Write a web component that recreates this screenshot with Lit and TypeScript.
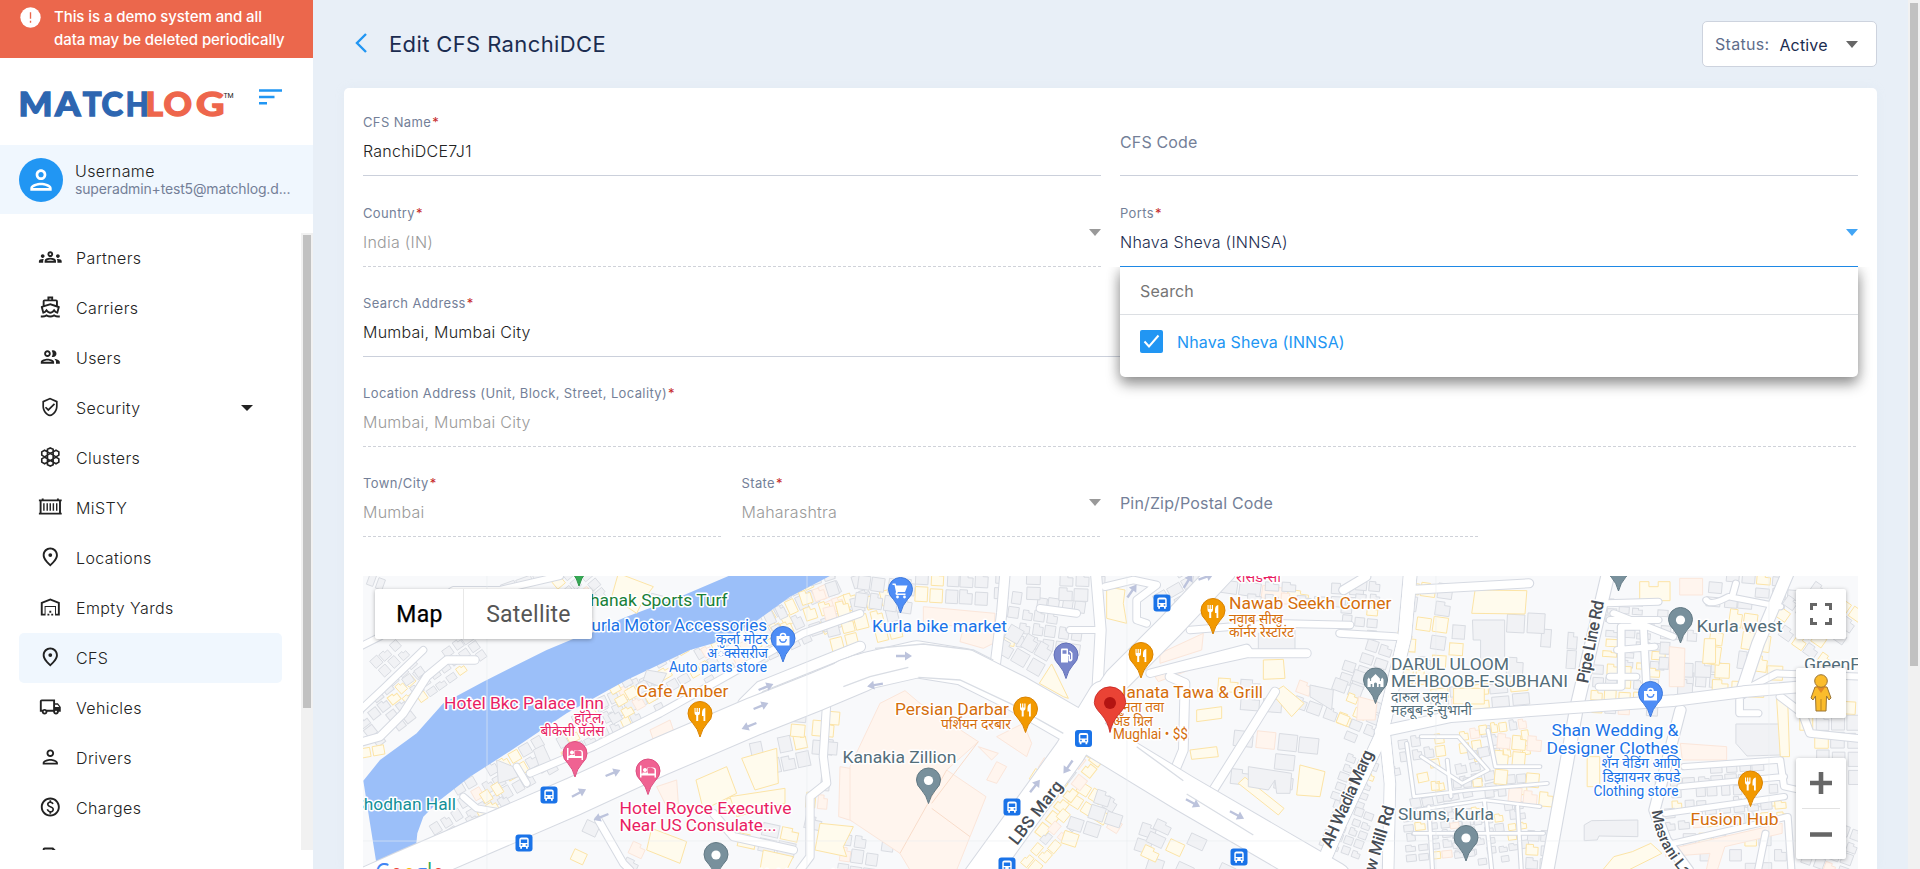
import { LitElement, html, css, svg, nothing } from "lit";
import { customElement, property } from "lit/decorators.js";

/* ---------- icons ---------- */
const icon: Record<string, any> = {
  partners: svg`<path d="M4 13c1.1 0 2-.9 2-2s-.9-2-2-2-2 .9-2 2 .9 2 2 2zm1.13 1.1C4.76 14.04 4.39 14 4 14c-.99 0-1.93.21-2.78.58A2.01 2.01 0 0 0 0 16.43V18h4.5v-1.61c0-.83.23-1.61.63-2.29zM20 13c1.1 0 2-.9 2-2s-.9-2-2-2-2 .9-2 2 .9 2 2 2zm4 3.43c0-.81-.48-1.53-1.22-1.85A6.95 6.95 0 0 0 20 14c-.39 0-.76.04-1.13.1.4.68.63 1.46.63 2.29V18H24v-1.57zM16.24 13.65c-1.17-.52-2.61-.9-4.24-.9s-3.07.39-4.24.9A2.99 2.99 0 0 0 6 16.39V18h12v-1.61c0-1.18-.68-2.26-1.76-2.74zM8.07 16c.09-.23.13-.39.91-.69.97-.38 1.99-.56 3.02-.56s2.05.18 3.02.56c.77.3.81.46.91.69H8.07zM12 8c.55 0 1 .45 1 1s-.45 1-1 1-1-.45-1-1 .45-1 1-1m0-2C10.340 6 9 7.340 9 9s1.340 3 3 3 3-1.340 3-3-1.340-3-3-3z"/>`,
  carriers: svg`<path d="M13 3v1h-2V3h2m-1 7.110l5.380 1.770 2.390.780-1.120 3.970c-.540-.300-.940-.710-1.140-.940L16 13.960l-1.510 1.720c-.340.400-1.280 1.320-2.490 1.320s-2.150-.920-2.490-1.320L8 13.960l-1.510 1.720c-.200.230-.600.630-1.140.930l-1.130-3.960 2.400-.790L12 10.110M15 1H9v3H6c-1.100 0-2 .900-2 2v4.620l-1.290.420c-.260.080-.480.260-.600.500s-.150.520-.060.780L3.950 19H4c1.600 0 3.020-.880 4-2 .980 1.120 2.400 2 4 2s3.020-.880 4-2c.980 1.120 2.400 2 4 2h.050l1.890-6.680c.080-.260.060-.540-.060-.780s-.340-.420-.600-.500L20 10.620V6c0-1.100-.900-2-2-2h-3V1zM6 9.970V6h12v3.970L12 8 6 9.970zM16 19.680c-1.220.850-2.610 1.280-4 1.280s-2.780-.430-4-1.280C6.780 20.530 5.390 21 4 21H2v2h2c1.380 0 2.740-.350 4-.990 1.260.640 2.630.970 4 .970s2.740-.320 4-.970c1.260.650 2.620.990 4 .990h2v-2h-2c-1.390 0-2.780-.470-4-1.320z"/>`,
  users: svg`<path d="M9 13.750c-2.340 0-7 1.170-7 3.500V19h14v-1.750c0-2.330-4.660-3.500-7-3.500zM4.340 17c.840-.580 2.870-1.250 4.660-1.250s3.820.670 4.660 1.250H4.340zM9 12c1.930 0 3.500-1.570 3.500-3.500S10.930 5 9 5 5.500 6.570 5.500 8.500 7.070 12 9 12zm0-5c.830 0 1.500.670 1.500 1.500S9.830 10 9 10s-1.500-.670-1.500-1.500S8.170 7 9 7zm7.040 6.810c1.160.840 1.960 1.960 1.960 3.440V19h4v-1.750c0-2.020-3.500-3.170-5.960-3.440zM15 12c1.930 0 3.500-1.570 3.500-3.500S16.930 5 15 5c-.540 0-1.040.130-1.500.350.630.890 1 1.980 1 3.150s-.370 2.260-1 3.150c.460.220.960.350 1.500.350z"/>`,
  security: svg`<path d="M12 1L3 5v6c0 5.550 3.840 10.740 9 12 5.160-1.260 9-6.450 9-12V5l-9-4zm7 10c0 4.520-2.980 8.690-7 9.930-4.020-1.240-7-5.410-7-9.930V6.300l7-3.110 7 3.110V11zm-11.590.590L6 13l4 4 8-8-1.410-1.420L10 14.170z"/>`,
  clusters: svg`<g fill="none" stroke="currentColor" stroke-width="1.7"><path d="M12 8.200l3 1.800v4l-3 1.800-3-1.800v-4zM12 2.500l3 1.300v3.000l-3 1.500-3-1.500V3.800zM12 15.700l3 1.500v3l-3 1.300-3-1.300v-3zM6 4.900l3 1.700V10l-3 1.900L3 10V6.600zM18 4.900l3 1.700V10l-3 1.900-3-1.900V6.600zM6 12.100l3 1.900v3.400l-3 1.700-3-1.700V14zM18 12.100l3 1.900v3.400l-3 1.700-3-1.700V14z"/></g>`,
  misty: svg`<path d="M0 4h3V3h2v1h14V3h2v1h3v2h-.800v12H24v2H0v-2h.800V6H0zm2.800 2v12h18.400V6zM4.500 8h1.500v8H4.500zM8 8h1.500v8H8zM11.200 8h1.500v8h-1.500zM14.500 8H16v8h-1.500zM18 8h1.500v8H18z"/>`,
  pin: svg`<path d="M12 2C7.800 2 4 5.220 4 10.200c0 3.320 2.670 7.250 8 11.800 5.330-4.550 8-8.480 8-11.800C20 5.220 16.200 2 12 2zm0 17.330c-4.050-3.700-6-6.790-6-9.140C6 6.570 8.650 4 12 4s6 2.570 6 6.200c0 2.340-1.950 5.440-6 9.130z"/><circle cx="12" cy="10" r="2"/>`,
  yard: svg`<path d="M20 8.350V19h-2v-8H6v8H4V8.350l8-3.200 8 3.200M22 21V7L12 3 2 7v14h5v-9h10v9h5zM11 19H9v2h2v-2zm2-3h-2v2h2v-2zm2 3h-2v2h2v-2z"/>`,
  truck: svg`<path d="M20 8h-3V4H3c-1.100 0-2 .900-2 2v11h2c0 1.660 1.340 3 3 3s3-1.340 3-3h6c0 1.660 1.340 3 3 3s3-1.340 3-3h2v-5l-3-4zm-.500 1.500l1.960 2.500H17V9.500h2.500zM6 18c-.550 0-1-.450-1-1s.450-1 1-1 1 .450 1 1-.450 1-1 1zm2.220-3A2.980 2.980 0 0 0 6 14c-.890 0-1.670.390-2.220 1H3V6h12v9H8.220zM18 18c-.550 0-1-.450-1-1s.450-1 1-1 1 .450 1 1-.450 1-1 1z"/>`,
  person: svg`<path d="M12 6c1.100 0 2 .900 2 2s-.900 2-2 2-2-.900-2-2 .900-2 2-2m0 10c2.700 0 5.800 1.290 6 2H6c.230-.720 3.310-2 6-2m0-12C9.790 4 8 5.790 8 8s1.790 4 4 4 4-1.790 4-4-1.790-4-4-4zm0 10c-2.670 0-8 1.340-8 4v2h16v-2c0-2.660-5.330-4-8-4z"/>`,
  charge: svg`<path d="M12 2C6.480 2 2 6.480 2 12s4.480 10 10 10 10-4.480 10-10S17.520 2 12 2zm0 18c-4.410 0-8-3.590-8-8s3.590-8 8-8 8 3.590 8 8-3.590 8-8 8zm.890-8.900c-1.780-.590-2.640-.960-2.640-1.900 0-1.020 1.110-1.390 1.810-1.390 1.310 0 1.790.990 1.900 1.340l1.580-.670c-.150-.440-.820-1.910-2.660-2.230V5h-1.750v1.260c-2.600.560-2.620 2.850-2.620 2.960 0 2.270 2.250 2.910 3.350 3.310 1.580.560 2.280 1.070 2.280 2.030 0 1.130-1.050 1.610-1.980 1.610-1.820 0-2.340-1.870-2.400-2.090l-1.660.670c.630 2.190 2.280 2.780 3.020 2.960V19h1.750v-1.240c.520-.090 3.020-.590 3.020-3.220.010-1.390-.600-2.610-3-3.440z"/>`,
  doc: svg`<path d="M6 2h9l5 5v15H4V4c0-1.100.900-2 2-2zm0 2v16h12V8h-4V4z"/>`,
};

/* ---------- street map ---------- */
function rng(seed: number) {
  let s = seed * 7919 + 13;
  return () => ((s = (s * 16807) % 2147483647) / 2147483647);
}
/* cx, cy, angle, columns, rows, cell width, cell height, warm share, density */
type Block = [number, number, number, number, number, number, number, number, number];
const blocks: Block[] = [
  [385, 585, 20, 4, 1, 10, 15, 0, 0.8], [402, 672, -42, 3, 5, 12, 12, 0.2, 0.85],
  [445, 668, -35, 7, 3, 12, 11, 0.12, 0.85], [383, 715, -38, 4, 4, 13, 12, 0.1, 0.8],
  [372, 752, -10, 2, 1, 14, 12, 1, 1], [525, 582, -20, 3, 1, 18, 13, 0, 1],
  [580, 588, 50, 4, 3, 12, 13, 0.1, 0.9], [650, 598, 15, 2, 1, 14, 12, 0, 1],
  [505, 778, -30, 8, 3, 13, 14, 0.1, 0.75], [470, 815, -32, 7, 2, 12, 14, 0.4, 0.8],
  [585, 730, -28, 5, 3, 13, 14, 0.15, 0.8], [625, 708, -25, 6, 3, 12, 15, 0.2, 0.7],
  [655, 680, -30, 9, 3, 13, 13, 0.3, 0.75], [745, 645, -30, 9, 3, 12, 13, 0.55, 0.75],
  [795, 615, -25, 9, 4, 12, 16, 0.5, 0.8], [835, 597, -18, 5, 4, 14, 16, 0.45, 0.8],
  [862, 622, -14, 5, 3, 15, 17, 0.8, 0.85], [885, 594, 8, 4, 2, 15, 18, 0.3, 0.9],
  [952, 588, 3, 5, 2, 15, 17, 0.3, 1], [1045, 624, 8, 6, 4, 13, 14, 0.12, 0.9],
  [1050, 587, 2, 7, 2, 16, 15, 0.1, 0.85], [1025, 651, 30, 3, 2, 17, 17, 0, 0.9],
  [780, 755, -12, 4, 2, 15, 18, 0.2, 0.8], [820, 765, 5, 2, 5, 12, 18, 0.7, 0.7],
  [1175, 590, -30, 3, 3, 17, 13, 0.3, 0.6], [1250, 590, 8, 5, 1, 24, 16, 0.7, 0.9],
  [1305, 594, 3, 7, 2, 17, 13, 0.2, 0.75], [1360, 610, 5, 3, 5, 13, 12, 0.1, 0.8],
  [1365, 665, 18, 3, 4, 15, 13, 0, 0.75], [1330, 690, 20, 4, 4, 16, 15, 0.15, 0.5],
  [1358, 720, 22, 3, 4, 14, 12, 0.4, 0.75], [1285, 762, 6, 5, 3, 22, 19, 0.15, 0.55],
  [1250, 695, 4, 3, 2, 22, 17, 0.6, 0.6], [1080, 795, 32, 7, 2, 15, 15, 0.7, 0.75],
  [1065, 790, -52, 7, 2, 15, 14, 0.95, 0.9], [1050, 842, -50, 5, 2, 14, 12, 0.9, 0.75],
  [1120, 830, 18, 6, 4, 18, 16, 0.3, 0.35], [1200, 860, 25, 6, 3, 19, 15, 0.25, 0.65],
  [865, 858, 8, 4, 3, 14, 16, 0.2, 0.7], [1355, 782, 20, 3, 5, 12, 10, 0.1, 0.9],
  [1347, 830, 20, 4, 5, 11, 10, 0.1, 0.9], [1425, 615, 8, 3, 4, 17, 17, 0.4, 0.8],
  [1432, 655, 4, 4, 4, 16, 16, 0.4, 0.55], [1460, 698, -5, 7, 2, 20, 14, 0.4, 0.75],
  [1440, 745, -8, 9, 2, 12, 13, 0.7, 0.8], [1500, 740, -8, 6, 3, 10, 13, 0.7, 0.75],
  [1450, 778, -12, 9, 4, 13, 12, 0.15, 0.45], [1480, 800, -5, 9, 4, 11, 12, 0.2, 0.45],
  [1440, 835, -6, 6, 5, 12, 10, 0.12, 0.75], [1490, 835, -8, 7, 6, 11, 10, 0.15, 0.65],
  [1525, 770, 5, 4, 4, 16, 18, 0.6, 0.6], [1540, 850, 3, 2, 3, 14, 14, 0.6, 0.8],
  [1637, 612, 4, 5, 3, 13, 9, 0.15, 0.7], [1635, 650, 4, 4, 4, 16, 10, 0.3, 0.7],
  [1625, 690, 3, 5, 4, 14, 13, 0.5, 0.7], [1690, 650, 4, 5, 5, 13, 15, 0.2, 0.45],
  [1730, 680, 2, 6, 2, 18, 18, 0.8, 0.8], [1740, 640, 8, 4, 3, 16, 20, 0.7, 0.7],
  [1755, 592, 5, 6, 3, 16, 13, 0.2, 0.6], [1815, 620, 35, 5, 5, 15, 14, 0.7, 0.8],
  [1830, 700, 3, 3, 2, 18, 15, 0.5, 0.8], [1710, 775, -3, 8, 2, 14, 11, 0.1, 0.9],
  [1725, 797, -3, 9, 2, 12, 13, 0.35, 0.85], [1725, 815, -5, 9, 2, 14, 12, 0.4, 0.85],
  [1830, 750, 0, 4, 4, 16, 18, 0.3, 0.6], [1735, 855, 0, 7, 3, 15, 15, 0.3, 0.6],
  [1825, 845, 20, 5, 4, 13, 13, 0.3, 0.7], [770, 830, 12, 5, 3, 20, 16, 0.3, 0.35],
  [600, 850, 25, 5, 3, 17, 15, 0.6, 0.4], [815, 725, 5, 3, 4, 17, 15, 0.6, 0.6],
  [1565, 640, 4, 4, 3, 13, 20, 0.1, 0.4], [1515, 645, 3, 3, 3, 20, 22, 0, 0.4],
];
const buildings = blocks.map(([cx, cy, a, nc, nr, w, h, warm, den], bi) => {
  const r = rng(bi + 3);
  const out: any[] = [];
  for (let i = 0; i < nc; i++)
    for (let j = 0; j < nr; j++) {
      const p = r(), k = r(), dx = r() * 3, dy = r() * 3, cut = r();
      if (p > den) continue;
      const x = (i - nc / 2) * w + dx, y = (j - nr / 2) * h + dy;
      const bw = w - 2 - dx * 0.6, bh = h - 2 - dy * 0.8;
      const cls = k < warm ? (k < warm * 0.15 ? "bo" : "by") : "bg";
      const d = cut < 0.4
        ? `M${x} ${y}h${bw * 0.6}v${bh * 0.25}h${bw * 0.4}v${bh * 0.75}h${-bw}z`
        : `M${x} ${y}h${bw}v${bh}h${-bw}z`;
      out.push(svg`<path class=${cls} d=${d}/>`);
    }
  return svg`<g transform=${`translate(${cx} ${cy}) rotate(${a})`}>${out}</g>`;
});

const west = "translate(360 570) scale(.33333)";
const mid = "translate(850 570) scale(.33333)";
const east = "translate(1340 570) scale(.37 .33333)";
const roads: [string, string, number][] = [
  [west, "M-10 520L60 500L130 430L200 320L260 270L345 270", 22],
  [west, "M-10 430L70 355L190 240", 18], [west, "M0 230L60 200L280 60L420 60L600 18", 18],
  [west, "M470 590L500 640", 18], [west, "M310 680L350 715L410 725", 18],
  [west, "M510 610L700 530L900 430L1150 290L1330 190L1500 130", 20],
  [west, "M1150 400L1200 350L1350 290L1500 230", 30],
  [west, "M1400 400L1390 560L1400 640L1350 680L1350 860L1320 900", 22],
  [west, "M715 750L790 880L810 900", 20], [west, "M1060 730L1120 800L1300 840", 22],
  [mid, "M435 290L455 130L465 10", 28], [mid, "M740 400L752 180L738 10", 30],
  [mid, "M765 50L850 30L920 45L860 90L860 150L890 160", 20],
  [mid, "M900 310L1190 235L1200 250", 22], [mid, "M960 300L1190 250L1370 250", 24],
  [mid, "M975 600L1000 540L1005 340L960 320", 26], [mid, "M1090 660L1275 365", 24],
  [mid, "M1020 180L1270 160L1500 165", 20], [mid, "M570 115L680 130", 20],
  [mid, "M660 180L750 180", 18],
  [east, "M-54 900L0 760L110 500L175 200L190 10", 34],
  [east, "M120 480L135 640L130 900", 28], [east, "M0 190L150 200", 20],
  [east, "M190 60L510 40", 24], [east, "M10 60L70 20", 24],
  [east, "M725 10L640 410L560 900", 34],
  [east, "M720 100L860 95M730 150L860 150M740 130L900 200M700 350L760 350L760 170L820 170L830 380M750 240L850 230M730 320L800 320", 18],
  [east, "M990 90Q1000 110 1050 80L1190 110M1060 80L1070 40", 16],
  [east, "M1210 10L1130 220L1085 370", 32], [east, "M1085 365L1180 310L1420 320", 18],
  [east, "M920 420L850 720L880 810L940 900", 28],
  [east, "M1080 390L1080 430L1130 430", 18], [east, "M1190 380L1250 430L1270 490L1400 505", 20],
  [east, "M930 590L1190 570M920 650L1200 620M880 730L1200 680M1190 570L1200 650L1240 660", 16],
  [east, "M900 820L1210 740L1220 900M1150 790L1130 900", 16],
  [east, "M220 500L320 500L400 600L330 640L220 560M180 520L200 680L350 660L560 640M400 480L420 590L540 590M210 720L390 690L540 710M200 790L550 790M240 710L250 900M390 690L410 900M480 710L490 900M290 570L300 680", 8],
];
const highway: [string, string, number][] = [
  [west, "M-60 985L130 900L640 680L900 560L1180 440L1370 365L1500 310", 112],
  [mid, "M-10 322L60 300L200 268L340 290L500 370L700 485L1000 668L1450 930", 108],
  [mid, "M360 960L660 545L760 380", 92], [mid, "M760 390L800 330L960 170L1120 0", 76],
  [east, "M110 485L300 440L640 412L900 392L1090 365L1250 350", 32],
];
const line = (cls: string, extra: number) => ([t, d, w]: [string, string, number]) =>
  svg`<path class=${cls} transform=${t} d=${d} stroke-width=${w + extra}/>`;

const arrows: [number, number, number][] = [
  [766, 687, -22], [761, 706, -22], [749, 726, 158], [613, 773, -22], [579, 793, -28], [601, 817, 158],
  [904, 656, 0], [875, 685, 170], [1068, 767, 125], [1035, 786, -52], [1193, 803, 28], [1237, 815, 28],
  [1132, 591, -55], [1188, 581, -58], [1206, 577, -20],
];
const stops = [[549, 795], [524, 843], [1162, 603], [1083.5, 738.5], [1012, 807], [1007, 866], [1239, 857]];

const glyph: Record<string, any> = {
  food: svg`<path d="M-5.500-6v5q0 2 1.700 2.300V7h2V1.300Q0 1 0-1v-5h-1.200v4h-1v-4h-1.200v4h-1v-4zM5.300-6Q2-5.500 2-1v3h1.500v5h1.800z"/>`,
  bed: svg`<path d="M-8-6h1.500v8h13V-1.500Q6.500-4-.5-4V1h-5v1H8v4H6.500V4h-13v2H-8zM-3-3.500a2 2 0 1 0 .01 0zM0-4h5q3 0 3 3v3H0z"/>`,
  dot: svg`<circle r="4.600"/>`,
  bag: svg`<path fill-rule="evenodd" d="M-6.500-3h3.200a3.300 3.300 0 0 1 6.600 0h3.200v9.500h-13zm4.700 0h3.600a1.800 1.800 0 0 0-3.600 0zM-4 0q.500 4 4 4t4-4H2.700Q2.500 2.500 0 2.500T-2.700 0z"/>`,
  cart: svg`<path d="M-8-6.500h3l.8 2H7L4.500 2h-7l-1 1.500H5V5h-8.500q-2.500-.500-1-3L-6-5h-2z"/><circle cx="-3" cy="7" r="1.400"/><circle cx="4" cy="7" r="1.400"/>`,
  fuel: svg`<path fill-rule="evenodd" d="M-5-6q0-1 1-1h5q1 0 1 1v5h1q1 0 1 1v3.500q.6.600 1 0V-2l-2-2 1-1 2.500 2.500V4q-.500 2-2.500 2t-1.500-2V.5H2V7h-7zM-3.500-5.300v3.600h4v-3.600z"/>`,
  mosque: svg`<path d="M-8 6.500V-1l1.300-2 1.300 2v1.500h1V-2L0-6.500 4.400-2V.5h1V-1l1.300-2L8-1v7.500H4.800V3.500h-1.600v3H1.500V3q-1.500-2-3 0v3.500h-1.700v-3h-1.600v3z"/>`,
  none: nothing,
};
const pins: [number, number, string, string, string][] = [
  [900.5, 590, "#4e8df6", "#3c78dc", "cart"], [783, 639, "#4e8df6", "#3c78dc", "bag"],
  [700, 714, "#f29900", "#d98200", "food"], [575, 754, "#f06292", "#dd4d80", "bed"],
  [648, 771.500, "#f06292", "#dd4d80", "bed"], [716, 855, "#78909c", "#627984", "dot"],
  [1066, 655.500, "#7986cb", "#6270b8", "fuel"], [1141, 655, "#f29900", "#d98200", "food"],
  [1213, 611, "#f29900", "#d98200", "food"], [1025.500, 709.500, "#f29900", "#d98200", "food"],
  [928.500, 780.500, "#78909c", "#627984", "dot"], [1375.500, 680.500, "#78909c", "#627984", "mosque"],
  [1680.500, 620, "#78909c", "#627984", "dot"], [1650.500, 694, "#4e8df6", "#3c78dc", "bag"],
  [1750.500, 783.500, "#f29900", "#d98200", "food"], [1466, 838, "#78909c", "#627984", "dot"],
  [1618.500, 568, "#78909c", "#627984", "none"], [579, 563, "#34a853", "#2a9446", "none"],
];
/* x, baseline, text, class, width, anchor */
const labels: [number, number, string, string, number, string?][] = [
  [727.500, 606, "Khanak Sports Turf", "lb green", 148.500, "end"],
  [767, 630.500, "Kurla Motor Accessories", "lb blue", 186, "end"],
  [768, 644, "कुर्ला मोटर", "hi blue", 52, "end"], [768, 658, "अॅक्सेसरीज", "hi blue", 61, "end"],
  [767, 672, "Auto parts store", "sm blue", 98, "end"],
  [636.500, 696.500, "Cafe Amber", "lb orange", 92],
  [444, 708.500, "Hotel Bkc Palace Inn", "lb pink", 160],
  [604, 722.500, "हॉटेल,", "hi pink", 30, "end"], [604.500, 736, "बीकेसी पॅलेस", "hi pink", 64, "end"],
  [619.500, 813.500, "Hotel Royce Executive", "lb pink", 172], [619.500, 831, "Near US Consulate...", "lb pink", 157],
  [456, 810, "Shodhan Hall", "lb teal", 102.500, "end"],
  [872, 631.500, "Kurla bike market", "lb blue", 135],
  [1009, 715, "Persian Darbar", "lb orange", 114, "end"], [1011, 728.500, "पर्शियन दरबार", "hi orange", 70, "end"],
  [956.500, 763, "Kanakia Zillion", "lb slate", 114, "end"],
  [1229, 609, "Nawab Seekh Corner", "lb orange", 162.500], [1229, 623.500, "नवाब सीख", "hi orange", 54],
  [1229, 637, "कॉर्नर रेस्टॉरंट", "hi orange", 65],
  [1117, 697.500, "Janata Tawa & Grill", "lb orange", 146], [1113, 712, "जनता तवा", "hi orange", 51],
  [1113, 725.500, "अँड ग्रिल", "hi orange", 40], [1113, 739, "Mughlai • $$", "sm orange", 75],
  [1236, 581.500, "रेसिडेन्सी", "hi pink", 45],
  [1391, 670, "DARUL ULOOM", "lb slate", 118], [1391, 687, "MEHBOOB-E-SUBHANI", "lb slate", 177],
  [1391, 701.500, "दारुल उलूम", "hi slate", 57], [1391, 715, "महबूब-इ-सुभानी", "hi slate", 81],
  [1696.500, 631.500, "Kurla west", "lb slate", 86], [1804, 670, "GreenField", "lb slate", 84],
  [1678.500, 736, "Shan Wedding &", "lb blue", 127, "end"], [1678.500, 753.500, "Designer Clothes", "lb blue", 132, "end"],
  [1680.500, 768, "शॅन वेडिंग आणि", "hi blue", 79, "end"], [1680.500, 781.500, "डिझायनर कपडे", "hi blue", 78, "end"],
  [1678.500, 795.500, "Clothing store", "sm blue", 85, "end"],
  [1690.500, 825, "Fusion Hub", "lb orange", 88], [1398, 819.500, "Slums, Kurla", "lb slate", 96],
  [759, 881, "Kohinoor city", "lb slate", 88],
];
/* x, y, rotation, text, width */
const streets: [number, number, number, string, number][] = [
  [1017, 846, -52, "LBS Marg", 76], [1331, 849, -66, "AH Wadia Marg", 105],
  [1588, 684, -79, "Pipe Line Rd", 84], [1369, 892, -73, "New Mill Rd", 88],
];

const map = svg`
  <path d="M340 560H1880V880H340z" fill="#f8f9fb"/>
  ${buildings}
  <g transform=${west}>
    <path fill="#9bbff9" d="M1115 14L960 80L800 140L560 240L370 335L250 400L170 490L60 570L10 632L30 760L50 885L90 860L168 830L172 790L190 740L240 690L330 620L440 550L530 490L620 430L800 330L990 240L1060 220L1180 160L1290 80L1425 10z"/>
    <path class="by" d="M775 10L880 50L850 90L830 130L800 110L755 80zM1008 630L1100 590L1130 670L1030 720zM1145 565L1250 535L1255 640L1185 660zM1110 680L1275 655V700L1130 740zM875 775L980 815L960 880L860 840zM1380 760L1480 770L1450 830L1460 860L1365 840zM1210 840L1300 860L1280 900H1200z"/>
    <path class="bg" d="M410 570L460 590L475 620L415 640zM520 540L550 525L580 590L545 610zM860 300L920 310L900 350L850 330z"/>
    <path class="bo" d="M870 480L930 450L940 480L880 510zM1440 590L1500 600V760L1436 740zM890 650L950 630L955 700L920 710z"/>
  </g>
  <g transform=${mid}>
    <path class="bo" d="M165 362L210 400L385 515L290 600L408 680L360 800L320 900H180L150 850L0 750V590L90 400zM930 250L1060 190L1055 240L930 280zM440 500L520 460L545 520L530 560zM220 110L435 130L430 220L400 235L330 215L340 170L220 160zM385 530L445 550L425 570zM440 575L470 590L440 640L410 630zM915 320L1040 275L1045 290L925 335z"/>
    <path fill="none" stroke="#f8dcca" stroke-width="3" d="M245 700L385 515M150 850L290 600M245 715L360 800"/>
    <path class="by" d="M568 340L605 282L655 385L640 380zM770 50L825 60L820 100L830 160L770 145zM1240 270L1300 268L1305 325L1240 328zM1265 370L1300 348L1362 400L1325 440zM1350 585L1425 605L1410 680L1340 675zM1165 640L1185 622L1302 715L1285 735zM1020 540L1100 530L1105 560L1025 568zM1040 420L1115 410L1115 445L1040 455z"/>
    <path class="bg" d="M1195 590L1325 610L1320 670L1280 670L1275 630L1255 660L1195 650zM1225 190L1335 180V255L1225 250zM1380 345L1450 360L1445 420L1380 380z"/>
  </g>
  <g transform=${east}>
    <path class="bg" d="M358 150H445V290H380V210H360zM1070 462H1190V555L1100 558L1070 520zM660 765L680 752L805 750V800L700 798L695 810L660 812z"/>
    <path class="by" d="M365 60L505 62L500 132L356 130zM810 35H835V50H860V35H892V92H810zM307 355H390V402H307zM1180 385L1210 390L1215 560H1190zM840 820L870 850L780 900H710L740 860L790 845zM668 560H702V650H668zM985 206H1015V280H980z"/>
    <path class="bo" d="M890 230L932 235L930 350H890zM920 520L1045 530V570H925zM918 25H980V75H918zM50 380L100 395L95 450L45 450zM880 840L1195 760V790L1040 830L1020 900H990L1000 850L880 860z"/>
  </g>
  ${roads.map(line("case", 6))}${roads.map(line("road", 0))}
  ${highway.map(line("case", 6))}${highway.map(line("road", 0))}${roads.slice(20, 22).map(line("road", 0))}
  <path transform=${mid} class="hair" d="M-20 350L60 320L175 292M75 235L220 222L370 240L430 270M205 322L330 330L480 400L640 490M860 530L1000 632M1010 672L1210 795"/>
  <path d="M487 576V869M807 576V869M1127 576V869M1436 576V869M1769 576V869M362 841H1858" stroke="#e9ecf0" stroke-width=".6"/>
  ${arrows.map(([x, y, a]) => svg`<path transform=${`translate(${x} ${y}) rotate(${a})`} fill="#bcc3dc" d="M-8-1.200H1V-4.500L8 0L1 4.500V1.200H-8z"/>`)}
  ${stops.map(([x, y]) => svg`<g transform=${`translate(${x} ${y})`}><rect x="-8.500" y="-8.500" width="17" height="17" rx="3" fill="#1a73e8"/><path fill="#fff" fill-rule="evenodd" d="M-4.700-3.500Q-4.700-5.500-2.500-5.500h5Q4.700-5.500 4.700-3.500V4H3.800V5.700H2V4h-4v1.700h-1.800V4h-.900zM-3.200-3.500V0h6.400v-3.500zM-3.300 1.300v1.500h1.600V1.300zM1.700 1.300v1.500h1.600V1.300z"/></g>`)}
  ${streets.map(([x, y, a, t, w]) => svg`<text class="lb street" transform=${`translate(${x} ${y}) rotate(${a})`} textLength=${w}>${t}</text>`)}
  <path id="masrani" d="M1652 811Q1655 842 1678 869T1708 905" fill="none"/>
  <text class="md street"><textPath href="#masrani">Masrani Lane</textPath></text>
  ${labels.map(([x, y, t, c, w, a]) => svg`<text class=${c} x=${x} y=${y} textLength=${w} lengthAdjust="spacingAndGlyphs" text-anchor=${a ?? "start"}>${t}</text>`)}
  ${pins.map(([x, y, f, s, g]) => svg`<g transform=${`translate(${x} ${y})`}><path fill=${f} stroke=${s} d="M0 23Q-2 15-7 9.500Q-12 5-12 -.5A12 12 0 0 1 12-.5Q12 5 7 9.500Q2 15 0 23z"/><g fill="#fff">${glyph[g]}</g></g>`)}
  <path fill="#ea4335" stroke="#c5221f" stroke-width=".8" d="M1110 732.500Q1108 722 1101 714Q1094.300 707 1094.300 702.500A15.700 15.700 0 0 1 1125.700 702.500Q1125.700 707 1119 714Q1112 722 1110 732.500z"/>
  <circle cx="1110" cy="703" r="6" fill="#b31412"/>
  <text class="google" x="375" y="883" textLength="69" lengthAdjust="spacingAndGlyphs"><tspan fill="#4285f4">G</tspan><tspan fill="#ea4335">o</tspan><tspan fill="#fbbc04">o</tspan><tspan fill="#4285f4">g</tspan><tspan fill="#34a853">l</tspan><tspan fill="#ea4335">e</tspan></text>
`;

@customElement("form-field")
export class FormField extends LitElement {
  @property() label = "";
  @property() value = "";
  @property({ type: Boolean }) required = false;
  @property({ type: Boolean }) disabled = false;
  @property({ type: Boolean }) select = false;
  @property({ type: Boolean }) open = false;
  static styles = css`
    :host { display: block; position: relative; }
    .box { height: 100%; box-sizing: border-box; display: flex; align-items: flex-end; border-bottom: 1px solid #cbd0db; }
    .disabled { border-bottom: 0; background: repeating-linear-gradient(90deg, #cfd2d9 0 3px, transparent 3px 5px) left bottom / 100% 1px no-repeat; padding-bottom: 1px; }
    .open { border-bottom-color: #1e88e5; }
    .text { flex: 1; }
    .label { font-size: 13px; line-height: 16px; letter-spacing: .37px; color: #747f98; margin-bottom: 11px; }
    .star { color: #c62828; margin-left: 1px; }
    .value { font-size: 16px; line-height: 20px; font-weight: 300; letter-spacing: .24px; color: #222; padding-bottom: 14px; }
    .disabled .value { color: #9a9a9a; }
    .open .value { color: #1b2c50; }
    .empty { font-size: 16px; line-height: 20px; letter-spacing: .15px; color: #747f98; padding-bottom: 23px; }
    .arrow { border: 6.500px solid transparent; border-top: 7px solid #999; border-bottom: 0; margin-bottom: 30px; }
    .open .arrow { border-top-color: #42a5f5; }
  `;
  render() {
    return html`<div class="box ${this.disabled ? "disabled" : ""} ${this.open ? "open" : ""}">
      <div class="text">
        ${this.value
          ? html`<div class="label">${this.label}${this.required ? html`<span class="star">*</span>` : nothing}</div>
              <div class="value">${this.value}</div>`
          : html`<div class="empty">${this.label}</div>`}
      </div>
      ${this.select ? html`<div class="arrow"></div>` : nothing}
    </div><slot></slot>`;
  }
}

const menu: [string, string][] = [
  ["partners", "Partners"], ["carriers", "Carriers"], ["users", "Users"], ["security", "Security"],
  ["clusters", "Clusters"], ["misty", "MiSTY"], ["pin", "Locations"], ["yard", "Empty Yards"],
  ["pin", "CFS"], ["truck", "Vehicles"], ["person", "Drivers"], ["charge", "Charges"], ["doc", ""],
];
/* letter, x, width, colour class */
const logo: [string, number, number, string][] = [
  ["M", 18.500, 34, "b"], ["A", 55, 25.500, "b"], ["T", 82.700, 18.800, "b"], ["C", 101.500, 21.500, "b"], ["H", 125.800, 23, "b"],
  ["L", 145.500, 17.500, "r"], ["O", 163.500, 28.500, "r"], ["G", 196, 28.500, "r"],
];

@customElement("app-root")
export class AppRoot extends LitElement {
  static styles = css`
    :host { display: flex; width: 100%; height: 869px; overflow: hidden; font-family: Inter, "Liberation Sans", sans-serif; background: #e8eff7; color: #222; }
    .side { width: 313px; flex: none; background: #fff; display: flex; flex-direction: column; }
    .banner { height: 58px; box-sizing: border-box; background: #eb674c; color: #fff; display: flex; gap: 13px; padding: 5px 0 0 20px; font-size: 15px; line-height: 23px; font-weight: 500; letter-spacing: -.08px; white-space: nowrap; }
    .banner svg { margin-top: 1.500px; flex: none; }
    .brand { height: 87px; flex: none; }
    .brand text { font-family: Lato, sans-serif; font-weight: 900; font-size: 33px; stroke-width: 1.300px; }
    .brand .b { fill: #2d66b1; stroke: #2d66b1; } .brand .r { fill: #ee664c; stroke: #ee664c; }
    .brand .tm { font: 400 7px Roboto, sans-serif; fill: #222; stroke: none; }
    .user { height: 69px; flex: none; background: #f0f7fe; display: flex; align-items: center; padding-left: 19px; gap: 12px; }
    .avatar { width: 44px; height: 44px; border-radius: 50%; background: #2196f3; color: #fff; display: grid; place-items: center; }
    .name { font-size: 16px; line-height: 18px; font-weight: 300; letter-spacing: .4px; }
    .mail { font-size: 14px; line-height: 17px; letter-spacing: -.15px; color: #747f98; }
    .scroller { margin-top: 19px; height: 617px; display: flex; overflow: hidden; }
    .menu { flex: 1; padding-left: 19px; }
    .item { height: 50px; width: 263px; box-sizing: border-box; padding-left: 19px; display: flex; align-items: center; border-radius: 5px; font-size: 16px; font-weight: 300; letter-spacing: .4px; }
    .item svg { margin-right: 14px; margin-bottom: 2.600px; flex: none; }
    .item.on { background: #f0f7fe; }
    .caret { border: 6px solid transparent; border-top: 6px solid #222; border-bottom: 0; margin-left: auto; margin-right: 29px; }
    .track { width: 12px; background: #f1f1f1; box-sizing: border-box; padding: 2px; flex: none; }
    .thumb { background: #c1c1c1; height: 473px; }
    .main { flex: 1; min-width: 0; padding: 0 31px; display: flex; flex-direction: column; }
    .head { height: 88px; flex: none; display: flex; align-items: center; }
    .back { margin: 0 21px 2px 10px; }
    .title { font-size: 22px; color: #1b2c50; font-weight: 400; letter-spacing: .38px; flex: 1; }
    .status { width: 175px; height: 46px; box-sizing: border-box; border: 1px solid #cdd3de; border-radius: 5px; background: #fff; display: flex; align-items: center; padding-left: 12px; font-size: 16px; letter-spacing: .3px; color: #5f6d8b; }
    .active { color: #1b2c50; margin: 1px 0 0 10px; font-weight: 400; letter-spacing: .15px; }
    .status .caret { border-top: 7px solid #666; border-left-width: 6.500px; border-right-width: 6.500px; margin-right: 18px; }
    .card { flex: 1; background: #fff; border-radius: 5px 5px 0 0; padding: 0 19px; display: flex; flex-direction: column; box-shadow: 0 0 10px rgba(200, 212, 228, .15); }
    .fields { display: grid; grid-template-columns: repeat(4, 1fr); grid-template-rows: 88px 91px 90px 90px 90px; column-gap: 19px; height: 449px; }
    .two { grid-column: span 2; } .four { grid-column: span 4; }
    .panel { position: absolute; z-index: 3; top: 91px; left: 0; right: 0; height: 110px; background: #fff; border-radius: 0 0 5px 5px; box-shadow: 0 7px 14px rgba(0, 0, 0, .4), 0 0 14px rgba(0, 0, 0, .14); clip-path: inset(0 -30px -40px -30px); font-size: 16px; letter-spacing: .14px; }
    .search { height: 47px; padding-left: 20px; display: flex; align-items: center; border-bottom: 1px solid #dcdfe3; box-sizing: content-box; color: #757575; font-weight: 400; }
    .option { height: 54px; padding-left: 20px; display: flex; align-items: center; gap: 14px; color: #2196f3; }
    .check { width: 23px; height: 23px; border-radius: 2px; background: #2196f3; display: grid; place-items: center; margin-bottom: 1px; }
    .mapbox { margin-top: 39px; height: 293px; position: relative; overflow: hidden; }
    .map { display: block; }
    .map .bg { fill: #f1f2f5; stroke: #d9dce2; } .map .by { fill: #fffbed; stroke: #fce4a6; } .map .bo { fill: #fff5ee; stroke: #fbe6da; }
    .map .bg, .map .by, .map .bo { stroke-width: 1; vector-effect: non-scaling-stroke; }
    .map .case { fill: none; stroke: #d6dae2; stroke-linejoin: round; stroke-linecap: round; }
    .map .road { fill: none; stroke: #fff; stroke-linejoin: round; stroke-linecap: round; }
    .map .hair { fill: none; stroke: #d9dde4; stroke-width: 4; }
    .map text { paint-order: stroke; stroke: #fff; stroke-width: 3px; stroke-linejoin: round; font-family: Roboto, "Noto Sans Devanagari", sans-serif; }
    .map .lb { font-size: 17px; } .map .sm { font-size: 14px; } .map .md { font-size: 15px; } .map .hi { font-size: 14px; }
    .map .google { font-family: "Open Sans", sans-serif; font-size: 28px; font-weight: 400; stroke-width: 2px; }
    .blue { fill: #1a73e8; } .green { fill: #188038; } .orange { fill: #d56e0c; } .pink { fill: #e91e63; } .teal { fill: #129098; } .slate { fill: #546e7a; } .street { fill: #474d55; font-weight: 500; }
    .toggle { position: absolute; left: 12px; top: 13px; height: 50px; display: flex; background: #fff; box-shadow: 0 1px 4px rgba(0, 0, 0, .3); border-radius: 2px; font: 400 23px Roboto, sans-serif; }
    .toggle div { display: grid; place-items: center; width: 88px; padding-left: 1px; box-sizing: border-box; color: #000; letter-spacing: .3px; -webkit-text-stroke: .25px #000; }
    .toggle .sat { width: 129px; color: #565656; border-left: 1px solid #e8e8e8; letter-spacing: .25px; -webkit-text-stroke: 0; }
    .ctl { position: absolute; right: 12px; width: 50px; height: 50px; background: #fff; border-radius: 2px; box-shadow: 0 1px 4px rgba(0, 0, 0, .3); display: grid; place-items: center; }
    .full { top: 13px; } .peg { top: 92px; } .zoom { top: 182px; height: 101px; }
    .page { flex: none; padding-top: 3px; } .page .thumb { width: 8px; height: 663px; }
  `;
  render() {
    return html`
      <aside class="side">
        <div class="banner">
          <svg width="21" height="21" viewBox="0 0 20 20"><circle cx="10" cy="10" r="9.700" fill="#fff"/><path d="M10 5v6.300M10 13v2" stroke="#eb674c" stroke-width="1.300"/></svg>
          <div>This is a demo system and all<br />data may be deleted periodically</div>
        </div>
        <svg class="brand" width="313" height="87">
          ${logo.map(([c, x, w, k]) => svg`<text class=${k} x=${x} y="57.500" textLength=${w} lengthAdjust="spacingAndGlyphs">${c}</text>`)}
          <text class="tm" x="223.500" y="40" textLength="10">TM</text>
          <path d="M259 32.500h23M259 39h15.500M259 45.300h8" stroke="#2196f3" stroke-width="2.500"/>
        </svg>
        <div class="user">
          <div class="avatar"><svg width="32" height="32" viewBox="0 0 24 24" fill="currentColor">${icon.person}</svg></div>
          <div><div class="name">Username</div><div class="mail">superadmin+test5@matchlog.d...</div></div>
        </div>
        <div class="scroller">
          <div class="menu">
            ${menu.map(([i, t]) => html`<div class="item ${t === "CFS" ? "on" : ""}">
              <svg width="24" height="24" viewBox="0 0 24 24"><g fill="currentColor" transform=${i === "security" ? "translate(1.800 1.800) scale(.85)" : "translate(.9 .6) scale(.95)"}>${icon[i]}</g></svg>
              ${t}${t === "Security" ? html`<div class="caret"></div>` : nothing}
            </div>`)}
          </div>
          <div class="track"><div class="thumb"></div></div>
        </div>
      </aside>
      <main class="main">
        <div class="head">
          <svg class="back" width="14" height="20" viewBox="0 0 14 20" fill="none" stroke="#2196f3" stroke-width="2.400"><path d="M12 1L3 10l9 9"/></svg>
          <div class="title">Edit CFS RanchiDCE</div>
          <div class="status">Status:<span class="active">Active</span><div class="caret"></div></div>
        </div>
        <section class="card">
          <div class="fields">
            <form-field class="two" label="CFS Name" value="RanchiDCE7J1" required></form-field>
            <form-field class="two" label="CFS Code"></form-field>
            <form-field class="two" label="Country" value="India (IN)" required disabled select></form-field>
            <form-field class="two" label="Ports" value="Nhava Sheva (INNSA)" required select open>
              <div class="panel">
                <div class="search">Search</div>
                <div class="option">
                  <div class="check"><svg width="17" height="15" viewBox="0 0 17 15"><path d="M1.500 7.500l4.500 5L15.500 1.500" fill="none" stroke="#fff" stroke-width="2"/></svg></div>
                  Nhava Sheva (INNSA)
                </div>
              </div>
            </form-field>
            <form-field class="four" label="Search Address" value="Mumbai, Mumbai City" required></form-field>
            <form-field class="four" label="Location Address (Unit, Block, Street, Locality)" value="Mumbai, Mumbai City" required disabled></form-field>
            <form-field label="Town/City" value="Mumbai" required disabled></form-field>
            <form-field label="State" value="Maharashtra" required disabled select></form-field>
            <form-field label="Pin/Zip/Postal Code" disabled></form-field>
          </div>
          <div class="mapbox">
            <svg class="map" width="1495" height="293" viewBox="363 576 1495 293">${map}</svg>
            <div class="toggle"><div>Map</div><div class="sat">Satellite</div></div>
            <div class="ctl full"><svg width="22" height="22" viewBox="0 0 22 22" fill="none" stroke="#666" stroke-width="3"><path d="M1.500 7V1.500H7M15 1.500h5.500V7M20.500 15v5.500H15M7 20.500H1.500V15"/></svg></div>
            <div class="ctl peg"><svg width="22" height="38" viewBox="0 0 22 38"><path d="M5 13h12l4 11-2 2-2.500-4L16 37H6L5.500 22 3 26l-2-2z" fill="#fbbc2c" stroke="#9a7434"/><path d="M6 12h10l-5 7z" fill="#e58a24"/><path d="M11 25v12" stroke="#b98424"/><circle cx="11" cy="7" r="6.300" fill="#fbbc2c" stroke="#9a7434"/></svg></div>
            <div class="ctl zoom"><svg width="38" height="101" viewBox="0 0 38 101"><path d="M8 25h22M19 14v22M8 76.500h22" stroke="#666" stroke-width="4.600"/><path d="M0 50.500h38" stroke="#e2e2e2"/></svg></div>
          </div>
        </section>
      </main>
      <div class="track page"><div class="thumb"></div></div>
    `;
  }
}
